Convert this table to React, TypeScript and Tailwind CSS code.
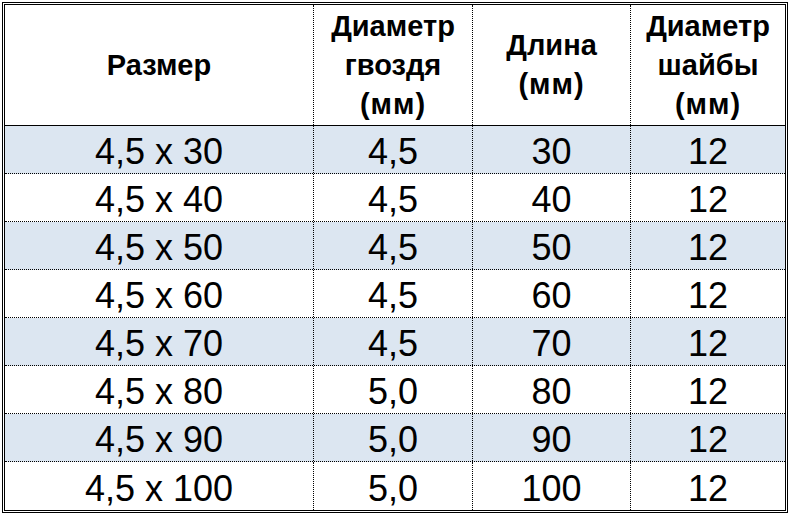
const headers = [
  ["Размер"],
  ["Диаметр", "гвоздя", "(мм)"],
  ["Длина", "(мм)"],
  ["Диаметр", "шайбы", "(мм)"],
];

const rows = [
  ["4,5 x 30", "4,5", "30", "12"],
  ["4,5 x 40", "4,5", "40", "12"],
  ["4,5 x 50", "4,5", "50", "12"],
  ["4,5 x 60", "4,5", "60", "12"],
  ["4,5 x 70", "4,5", "70", "12"],
  ["4,5 x 80", "5,0", "80", "12"],
  ["4,5 x 90", "5,0", "90", "12"],
  ["4,5 x 100", "5,0", "100", "12"],
];

export default function App() {
  return (
    <div className="w-[790px] h-[515px] bg-white pt-[2px] pl-[2px] font-['Liberation_Sans',Arial,sans-serif] text-black">
      <div className="w-[786px] border-[3px] border-double border-black">
        <div className="grid grid-cols-[309px_159px_158px_154px] h-[121px] border-b border-black">
          {headers.map((lines, i) => (
            <div
              key={i}
              className={
                "flex flex-col items-center justify-center text-[29px] font-bold leading-[39px] " +
                (i < 3 ? "border-r border-dotted border-black" : "")
              }
            >
              {lines.map((l) => (
                <span key={l} className={l === "(мм)" ? "tracking-[1px]" : ""}>
                  {l}
                </span>
              ))}
            </div>
          ))}
        </div>
        {rows.map((row, r) => (
          <div
            key={r}
            className={
              "grid grid-cols-[309px_159px_158px_154px] h-[48px] " +
              (r % 2 === 0 ? "bg-[#dce6f1] " : "bg-white ") +
              (r < rows.length - 1 ? "border-b border-dotted border-black" : "")
            }
          >
            {row.map((cell, i) => (
              <div
                key={i}
                className={
                  "flex items-center justify-center pt-[5px] text-[36px] leading-none " +
                  (i < 3 ? "border-r border-dotted border-black" : "")
                }
              >
                {cell}
              </div>
            ))}
          </div>
        ))}
      </div>
    </div>
  );
}
